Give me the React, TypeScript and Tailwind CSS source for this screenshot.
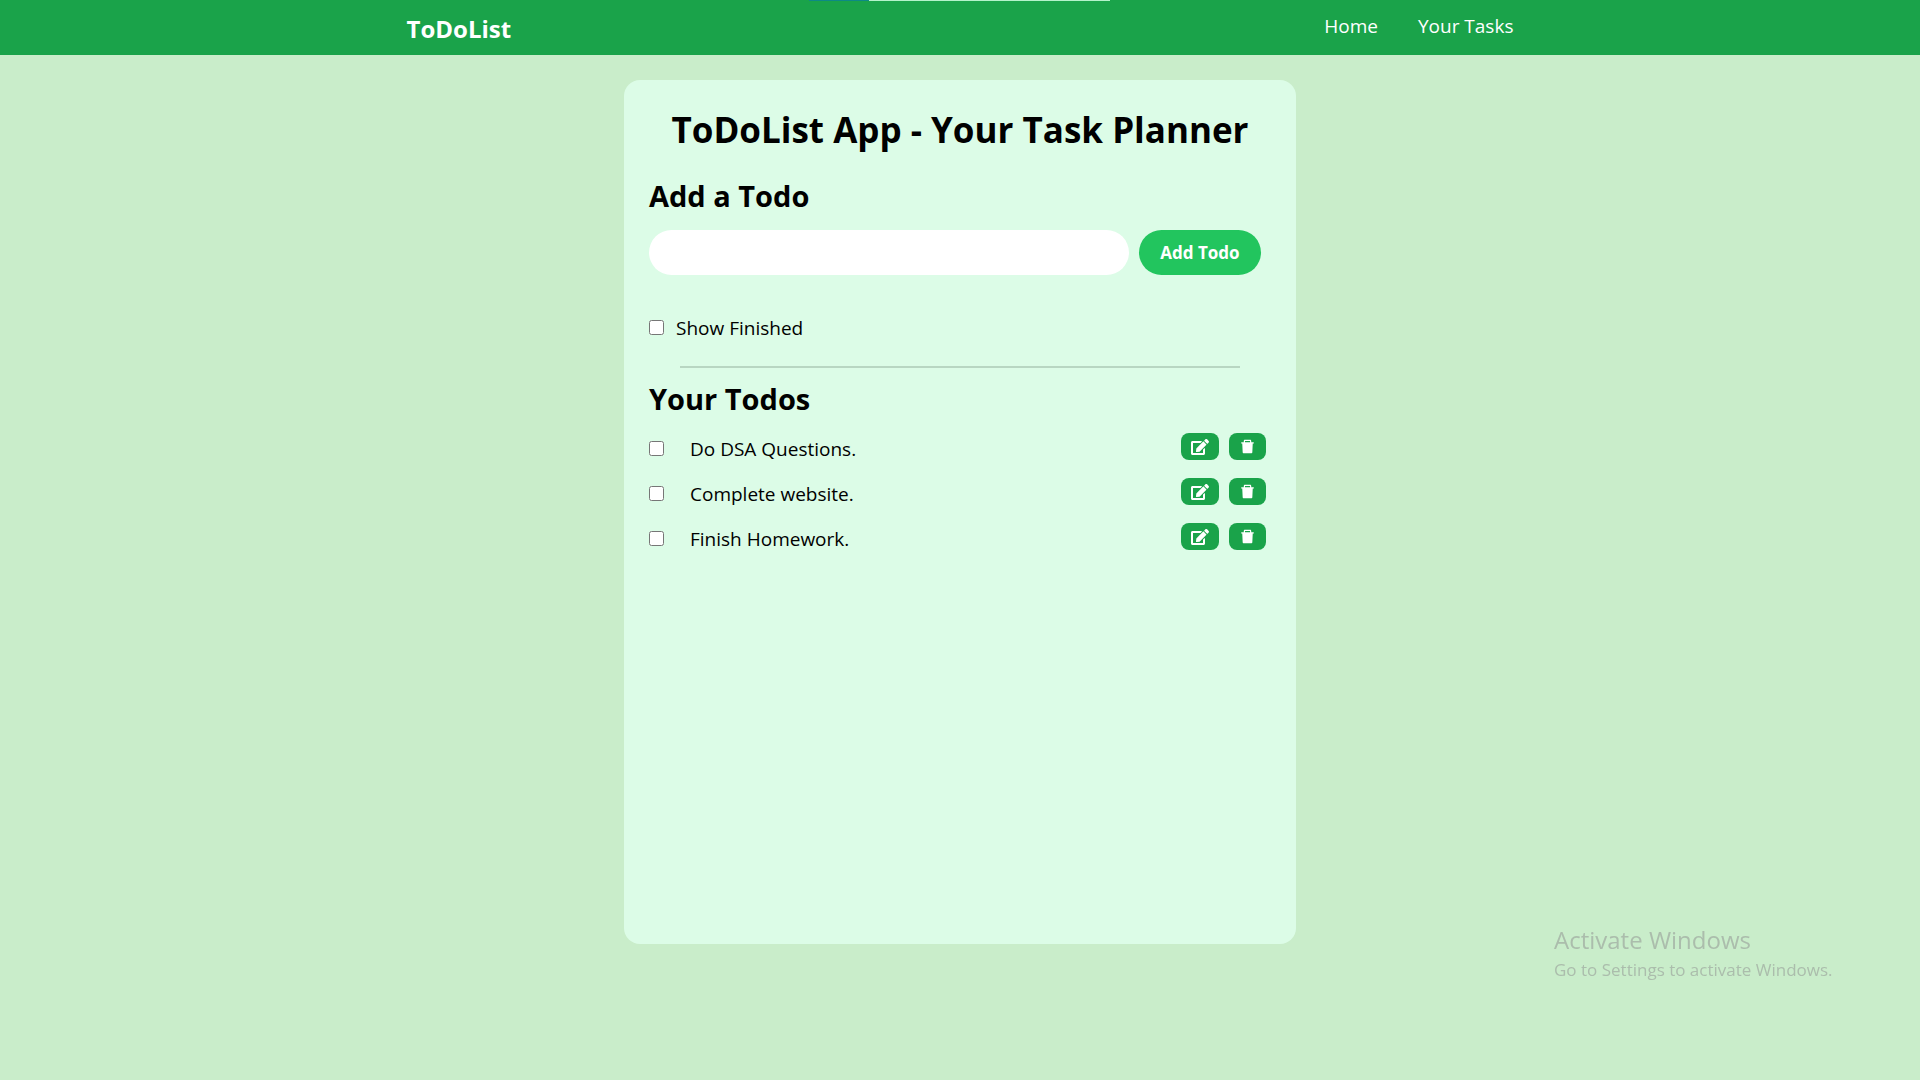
import { useState } from "react";
import { FaEdit } from "react-icons/fa";
import { AiFillDelete } from "react-icons/ai";

type Todo = { id: number; text: string; done: boolean };

const initialTodos: Todo[] = [
  { id: 1, text: "Do DSA Questions.", done: false },
  { id: 2, text: "Complete website.", done: false },
  { id: 3, text: "Finish Homework.", done: false },
];

function Navbar() {
  return (
    <nav className="flex h-[55px] items-center justify-around bg-[#1aa34a] text-white">
      <a href="#" className="pt-0.5 text-2xl font-bold">
        ToDoList
      </a>
      <ul className="flex gap-10 pb-1 text-[19px] leading-7">
        <li>
          <a href="#home">Home</a>
        </li>
        <li>
          <a href="#tasks">Your Tasks</a>
        </li>
      </ul>
    </nav>
  );
}

function LoadingStrip() {
  return (
    <div className="fixed top-0 left-[809px] flex h-px w-[301px]">
      <div className="w-1/5 bg-[#0d8a86]" />
      <div className="flex-1 bg-[#b4f3cb]" />
    </div>
  );
}

function Watermark() {
  return (
    <div className="pointer-events-none fixed right-20 bottom-24 w-[286px] text-[#abbdac]">
      <p className="text-2xl leading-8">Activate Windows</p>
      <p className="text-[17px] leading-7 whitespace-nowrap">Go to Settings to activate Windows.</p>
    </div>
  );
}

export default function App() {
  const [todos, setTodos] = useState(initialTodos);
  const [draft, setDraft] = useState("");
  const [showFinished, setShowFinished] = useState(false);

  const addTodo = () => {
    if (!draft.trim()) return;
    setTodos([...todos, { id: Date.now(), text: draft, done: false }]);
    setDraft("");
  };

  const toggle = (id: number) =>
    setTodos(todos.map((t) => (t.id === id ? { ...t, done: !t.done } : t)));

  const remove = (id: number) => setTodos(todos.filter((t) => t.id !== id));

  const edit = (todo: Todo) => {
    setDraft(todo.text);
    remove(todo.id);
  };

  return (
    <div className="min-h-screen bg-[#c9edca] font-['Open_Sans','Noto_Sans',sans-serif] text-black">
      <Navbar />
      <LoadingStrip />
      <main className="mx-auto mt-[25px] min-h-[80vh] w-[35%] rounded-2xl bg-[#dcfce7] p-[25px]">
        <h1 className="text-center text-[35px] leading-[50px] font-bold whitespace-nowrap">
          ToDoList App - Your Task Planner
        </h1>
        <h2 className="mt-5 text-[29px] leading-[42px] font-bold">
          <label htmlFor="new-todo">Add a Todo</label>
        </h2>
        <div className="mt-[13px] flex gap-2.5 pr-2.5">
          <input
            id="new-todo"
            type="text"
            value={draft}
            onChange={(e) => setDraft(e.target.value)}
            className="h-[45px] min-w-0 flex-1 rounded-full bg-white px-5 text-lg outline-none"
          />
          <button
            type="button"
            onClick={addTodo}
            className="h-[45px] w-[122px] rounded-full bg-[#22c55e] text-[17px] font-bold text-white"
          >
            Add Todo
          </button>
        </div>
        <div className="mt-[37px] flex items-center gap-3">
          <input
            id="show-finished"
            type="checkbox"
            checked={showFinished}
            onChange={() => setShowFinished(!showFinished)}
            className="size-[15px]"
          />
          <label htmlFor="show-finished" className="pt-0.5 text-[19px] leading-7">
            Show Finished
          </label>
        </div>
        <hr className="mx-auto mt-6 w-[90%] border-t-2 border-[#b8d6c2]" />
        <h2 className="mt-2.5 text-[29px] leading-[42px] font-bold">Your Todos</h2>
        <ul className="mt-1.5">
          {todos
            .filter((t) => showFinished || !t.done)
            .map((todo) => (
              <li key={todo.id} className="flex h-[45px] items-center">
                <input
                  id={`todo-${todo.id}`}
                  type="checkbox"
                  checked={todo.done}
                  onChange={() => toggle(todo.id)}
                  className="size-[15px]"
                />
                <label
                  htmlFor={`todo-${todo.id}`}
                  className={
                    todo.done
                      ? "ml-[26px] flex-1 text-[19px] leading-7 line-through"
                      : "ml-[26px] flex-1 text-[19px] leading-7"
                  }
                >
                  {todo.text}
                </label>
                <div className="flex gap-2.5 pr-[5px] pb-1">
                  <button
                    type="button"
                    aria-label="Edit"
                    onClick={() => edit(todo)}
                    className="flex h-[27px] w-[38px] items-center justify-center rounded-lg bg-[#1aa34a] text-white"
                  >
                    <FaEdit size={18} />
                  </button>
                  <button
                    type="button"
                    aria-label="Delete"
                    onClick={() => remove(todo.id)}
                    className="flex h-[27px] w-[37px] items-center justify-center rounded-lg bg-[#1aa34a] text-white"
                  >
                    <AiFillDelete size={17} />
                  </button>
                </div>
              </li>
            ))}
        </ul>
      </main>
      <Watermark />
    </div>
  );
}
